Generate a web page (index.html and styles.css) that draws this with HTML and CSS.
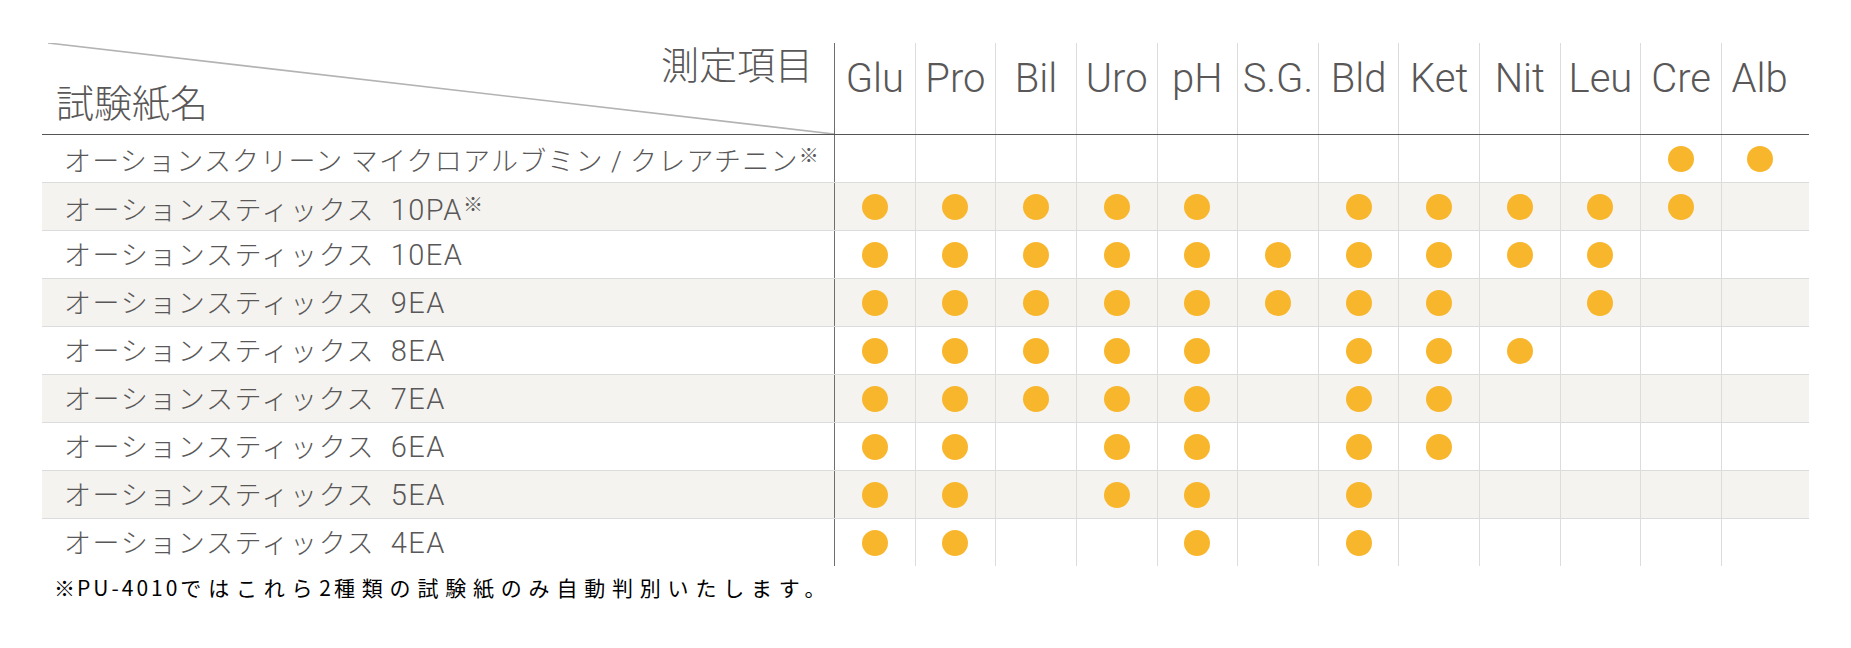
FILE: index.html
```html
<!DOCTYPE html>
<html lang="ja">
<head>
<meta charset="utf-8">
<title>試験紙 測定項目</title>
<link rel="stylesheet" href="styles.css">
</head>
<body>
<div class="wrap">
  <div class="table">
    <div class="row head">
      <div class="cell name-head">
        <svg class="diag" viewBox="0 0 792 91" preserveAspectRatio="none"><line x1="6" y1="0" x2="792" y2="91" stroke="#b3b3b3" stroke-width="1.6"/></svg>
        <div class="h-item">測定項目</div>
        <div class="h-name">試験紙名</div>
      </div>
      <div class="cell lab first">Glu</div>
      <div class="cell lab">Pro</div>
      <div class="cell lab">Bil</div>
      <div class="cell lab">Uro</div>
      <div class="cell lab">pH</div>
      <div class="cell lab">S.G.</div>
      <div class="cell lab">Bld</div>
      <div class="cell lab">Ket</div>
      <div class="cell lab">Nit</div>
      <div class="cell lab">Leu</div>
      <div class="cell lab">Cre</div>
      <div class="cell lab last">Alb</div>
    </div>

    <div class="row top">
      <div class="cell name"><span class="txt tight">オーションスクリーン マイクロアルブミン <span class="sl">/</span> クレアチニン<span class="sup">※</span></span></div>
      <div class="cell first"></div><div class="cell"></div><div class="cell"></div><div class="cell"></div><div class="cell"></div><div class="cell"></div><div class="cell"></div><div class="cell"></div><div class="cell"></div><div class="cell"></div>
      <div class="cell"><span class="dot"></span></div><div class="cell last"><span class="dot"></span></div>
    </div>

    <div class="row alt">
      <div class="cell name"><span class="txt">オーションスティックス <span class="code">10PA</span><span class="sup">※</span></span></div>
      <div class="cell first"><span class="dot"></span></div><div class="cell"><span class="dot"></span></div><div class="cell"><span class="dot"></span></div><div class="cell"><span class="dot"></span></div><div class="cell"><span class="dot"></span></div><div class="cell"></div><div class="cell"><span class="dot"></span></div><div class="cell"><span class="dot"></span></div><div class="cell"><span class="dot"></span></div><div class="cell"><span class="dot"></span></div><div class="cell"><span class="dot"></span></div><div class="cell last"></div>
    </div>

    <div class="row">
      <div class="cell name"><span class="txt">オーションスティックス <span class="code">10EA</span></span></div>
      <div class="cell first"><span class="dot"></span></div><div class="cell"><span class="dot"></span></div><div class="cell"><span class="dot"></span></div><div class="cell"><span class="dot"></span></div><div class="cell"><span class="dot"></span></div><div class="cell"><span class="dot"></span></div><div class="cell"><span class="dot"></span></div><div class="cell"><span class="dot"></span></div><div class="cell"><span class="dot"></span></div><div class="cell"><span class="dot"></span></div><div class="cell"></div><div class="cell last"></div>
    </div>

    <div class="row alt">
      <div class="cell name"><span class="txt">オーションスティックス <span class="code">9EA</span></span></div>
      <div class="cell first"><span class="dot"></span></div><div class="cell"><span class="dot"></span></div><div class="cell"><span class="dot"></span></div><div class="cell"><span class="dot"></span></div><div class="cell"><span class="dot"></span></div><div class="cell"><span class="dot"></span></div><div class="cell"><span class="dot"></span></div><div class="cell"><span class="dot"></span></div><div class="cell"></div><div class="cell"><span class="dot"></span></div><div class="cell"></div><div class="cell last"></div>
    </div>

    <div class="row">
      <div class="cell name"><span class="txt">オーションスティックス <span class="code">8EA</span></span></div>
      <div class="cell first"><span class="dot"></span></div><div class="cell"><span class="dot"></span></div><div class="cell"><span class="dot"></span></div><div class="cell"><span class="dot"></span></div><div class="cell"><span class="dot"></span></div><div class="cell"></div><div class="cell"><span class="dot"></span></div><div class="cell"><span class="dot"></span></div><div class="cell"><span class="dot"></span></div><div class="cell"></div><div class="cell"></div><div class="cell last"></div>
    </div>

    <div class="row alt">
      <div class="cell name"><span class="txt">オーションスティックス <span class="code">7EA</span></span></div>
      <div class="cell first"><span class="dot"></span></div><div class="cell"><span class="dot"></span></div><div class="cell"><span class="dot"></span></div><div class="cell"><span class="dot"></span></div><div class="cell"><span class="dot"></span></div><div class="cell"></div><div class="cell"><span class="dot"></span></div><div class="cell"><span class="dot"></span></div><div class="cell"></div><div class="cell"></div><div class="cell"></div><div class="cell last"></div>
    </div>

    <div class="row">
      <div class="cell name"><span class="txt">オーションスティックス <span class="code">6EA</span></span></div>
      <div class="cell first"><span class="dot"></span></div><div class="cell"><span class="dot"></span></div><div class="cell"></div><div class="cell"><span class="dot"></span></div><div class="cell"><span class="dot"></span></div><div class="cell"></div><div class="cell"><span class="dot"></span></div><div class="cell"><span class="dot"></span></div><div class="cell"></div><div class="cell"></div><div class="cell"></div><div class="cell last"></div>
    </div>

    <div class="row alt">
      <div class="cell name"><span class="txt">オーションスティックス <span class="code">5EA</span></span></div>
      <div class="cell first"><span class="dot"></span></div><div class="cell"><span class="dot"></span></div><div class="cell"></div><div class="cell"><span class="dot"></span></div><div class="cell"><span class="dot"></span></div><div class="cell"></div><div class="cell"><span class="dot"></span></div><div class="cell"></div><div class="cell"></div><div class="cell"></div><div class="cell"></div><div class="cell last"></div>
    </div>

    <div class="row">
      <div class="cell name"><span class="txt">オーションスティックス <span class="code">4EA</span></span></div>
      <div class="cell first"><span class="dot"></span></div><div class="cell"><span class="dot"></span></div><div class="cell"></div><div class="cell"></div><div class="cell"><span class="dot"></span></div><div class="cell"></div><div class="cell"><span class="dot"></span></div><div class="cell"></div><div class="cell"></div><div class="cell"></div><div class="cell"></div><div class="cell last"></div>
    </div>
  </div>
  <p class="note"><span class="mark">※</span><span class="lat">PU-4010</span>ではこれら<span class="lat">2</span>種類の試験紙のみ自動判別いたします。</p>
</div>
</body>
</html>
```

FILE: styles.css
```css
html, body {
  margin: 0;
  padding: 0;
  background: #ffffff;
}

body {
  font-family: "Noto Sans CJK JP", "Noto Sans", sans-serif;
  color: #595757;
}

.wrap {
  padding: 43px 0 0 42px;
}

.table {
  width: 1766.5px;
}

.row {
  display: grid;
  grid-template-columns: 792px repeat(11, 80.64px) 87.5px;
  height: 48px;
  box-sizing: border-box;
  border-top: 1px solid #dcdcdc;
}

.row.head {
  height: 92px;
  border-top: none;
  border-bottom: 1px solid #555555;
}

.row.top {
  height: 47px;
  border-top: none;
}

.row.alt {
  background: #f4f3ef;
}

.cell {
  display: flex;
  align-items: center;
  justify-content: center;
  border-left: 1px solid #dcdcdc;
  min-width: 0;
}

.cell.first {
  border-left-color: #6e6e6e;
}

.cell.last {
  padding-right: 11px;
}

.cell.name {
  border-left: none;
  justify-content: flex-start;
  padding-left: 22px;
  font-size: 27px;
  font-weight: 300;
  white-space: nowrap;
}

.txt {
  letter-spacing: 1.6px;
  line-height: 36px;
}

.txt.tight {
  letter-spacing: 1.2px;
}

.code {
  font-family: "Roboto", "Noto Sans CJK JP", sans-serif;
  font-weight: 300;
  font-size: 29px;
  letter-spacing: 1.5px;
  margin-left: 8px;
}

.sl {
  font-family: "Roboto", sans-serif;
  font-weight: 300;
}

.sup {
  font-size: 20px;
  letter-spacing: 0;
  vertical-align: 8px;
}

.name-head {
  position: relative;
  display: block;
  border-left: none;
  padding: 1px 21px 0 14px;
  font-size: 38px;
  line-height: 38px;
  font-weight: 300;
}

.diag {
  position: absolute;
  left: 0;
  top: 0;
  width: 100%;
  height: 100%;
}

.h-item {
  text-align: right;
}

.h-name {
  text-align: left;
}

.cell.lab {
  align-items: flex-start;
  padding-top: 15px;
  font-family: "Roboto", "Noto Sans CJK JP", sans-serif;
  font-size: 40px;
  line-height: 41px;
  font-weight: 300;
  white-space: nowrap;
}

.dot {
  width: 26px;
  height: 26px;
  border-radius: 50%;
  background: #f8b62d;
}

.note {
  margin: 6px 0 0 12px;
  font-size: 21px;
  line-height: 30px;
  letter-spacing: 6.8px;
  color: #000000;
}

.note .mark {
  letter-spacing: 2px;
}

.note .lat {
  letter-spacing: 3px;
}
```
